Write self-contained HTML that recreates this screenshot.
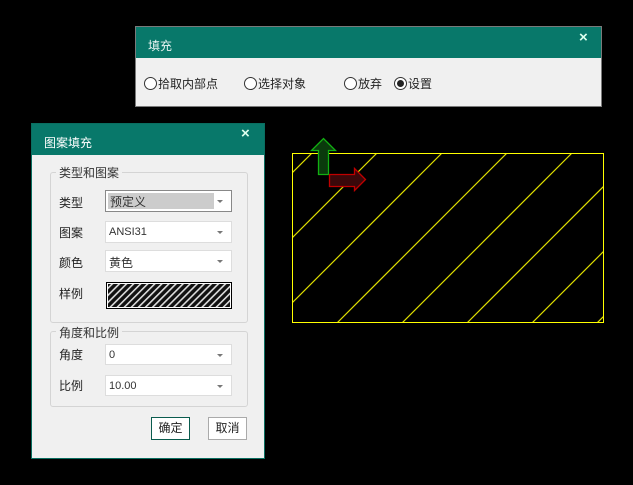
<!DOCTYPE html><html><head><meta charset="utf-8"><style>
body{margin:0;width:633px;height:485px;background:#000;position:relative;overflow:hidden;font-family:"Liberation Sans","Noto Sans CJK SC",sans-serif;font-size:12px;color:#222}
.a{position:absolute}
.dlg{background:#f0f0f0;border:1px solid #7a7a7a}
.tb{background:#08786a;color:#e8f4f2;font-size:12px}
.x{color:#dfe;font-size:15px;font-weight:bold}
.rad{display:inline-block;width:11px;height:11px;border:1px solid #333;border-radius:50%;background:#fff;vertical-align:-2px;margin-right:1px;position:relative}
.grp{border:1px solid #d4d4d4;border-radius:3px}
.gl{background:#f0f0f0;padding:0 3px;color:#333}
.cb{background:#fff;border:1px solid #ddd;box-sizing:border-box;font-size:11px;color:#333;padding:4px 0 0 3px}
.cb:after{content:"";position:absolute;right:8px;top:9px;border:3px solid transparent;border-top:3px solid #777}
.btn{background:#fff;border:1px solid #aaa;box-sizing:border-box;text-align:center;line-height:20px}
</style></head><body>
<svg class="a" style="left:0;top:0" width="633" height="485">
<defs><clipPath id="c"><rect x="292" y="153" width="312" height="170"/></clipPath></defs>
<g clip-path="url(#c)" stroke="#e0e000" stroke-width="1.2">
<line x1="292" y1="173" x2="312" y2="153"/><line x1="292" y1="238" x2="377" y2="153"/><line x1="292" y1="303" x2="442" y2="153"/><line x1="325" y1="335" x2="507" y2="153"/><line x1="390" y1="335" x2="572" y2="153"/><line x1="455" y1="335" x2="637" y2="153"/><line x1="520" y1="335" x2="702" y2="153"/><line x1="585" y1="335" x2="767" y2="153"/></g>
<rect x="292.5" y="153.5" width="311" height="169" fill="none" stroke="#ffff00" stroke-width="1"/>
<path d="M318.5,174.5 V150.5 H311.5 L323.5,138.5 L335.5,150.5 H328.5 V174.5 Z" fill="#0a3a0c" stroke="#12b012" stroke-width="1.3"/>
<path d="M329.5,174.5 H354.5 V168.5 L365.5,179.5 L354.5,190.5 V186.5 H329.5 Z" fill="#3a080a" stroke="#c00000" stroke-width="1.3"/>
</svg>

<div class="a dlg" style="left:135px;top:26px;width:465px;height:79px">
<div class="a tb" style="left:0;top:0;width:465px;height:31px"><span class="a" style="left:12px;top:10px">填充</span><span class="a x" style="left:443px;top:2px">×</span></div>
<div class="a" style="left:8px;top:48px;white-space:nowrap"><span class="rad"></span>拾取内部点</div>
<div class="a" style="left:108px;top:48px;white-space:nowrap"><span class="rad"></span>选择对象</div>
<div class="a" style="left:208px;top:48px;white-space:nowrap"><span class="rad"></span>放弃</div>
<div class="a" style="left:258px;top:48px;white-space:nowrap"><span class="rad"><span class="a" style="left:2px;top:2px;width:7px;height:7px;border-radius:50%;background:#222"></span></span>设置</div>
</div>

<div class="a dlg" style="left:31px;top:123px;width:232px;height:334px;border:1px solid #0a6e60">
<div class="a tb" style="left:0;top:0;width:232px;height:31px"><span class="a" style="left:12px;top:10px;color:#fff">图案填充</span><span class="a x" style="left:209px;top:1px">×</span></div>
<div class="a grp" style="left:18px;top:48px;width:196px;height:149px"></div>
<span class="a gl" style="left:24px;top:40px">类型和图案</span>
<span class="a" style="left:27px;top:70px">类型</span>
<div class="a cb" style="left:73px;top:66px;width:127px;height:22px;border:1px solid #888;padding:2px"><div style="background:#ccc;width:104px;height:16px;font-size:12px;padding-left:2px">预定义</div></div>
<span class="a" style="left:27px;top:100px">图案</span>
<div class="a cb" style="left:73px;top:97px;width:127px;height:22px">ANSI31</div>
<span class="a" style="left:27px;top:130px">颜色</span>
<div class="a cb" style="left:73px;top:126px;width:127px;height:22px;font-size:12px;padding-top:3px">黄色</div>
<span class="a" style="left:27px;top:161px">样例</span>
<svg class="a" style="left:74px;top:158px" width="126" height="27"><defs><pattern id="p" width="5" height="5" patternUnits="userSpaceOnUse" patternTransform="rotate(45)"><rect width="5" height="5" fill="#111"/><rect width="1.6" height="5" fill="#ddd"/></pattern></defs><rect x="0.5" y="0.5" width="125" height="26" fill="url(#p)" stroke="#000" stroke-width="1"/><rect x="1.5" y="1.5" width="123" height="24" fill="none" stroke="#fff"/></svg>
<div class="a grp" style="left:18px;top:207px;width:196px;height:74px"></div>
<span class="a gl" style="left:24px;top:200px">角度和比例</span>
<span class="a" style="left:27px;top:222px">角度</span>
<div class="a cb" style="left:73px;top:220px;width:127px;height:21px">0</div>
<span class="a" style="left:27px;top:253px">比例</span>
<div class="a cb" style="left:73px;top:251px;width:127px;height:21px">10.00</div>
<div class="a btn" style="left:119px;top:293px;width:39px;height:23px;border:1px solid #0a5c4e">确定</div>
<div class="a btn" style="left:176px;top:293px;width:39px;height:23px">取消</div>
</div>
</body></html>
